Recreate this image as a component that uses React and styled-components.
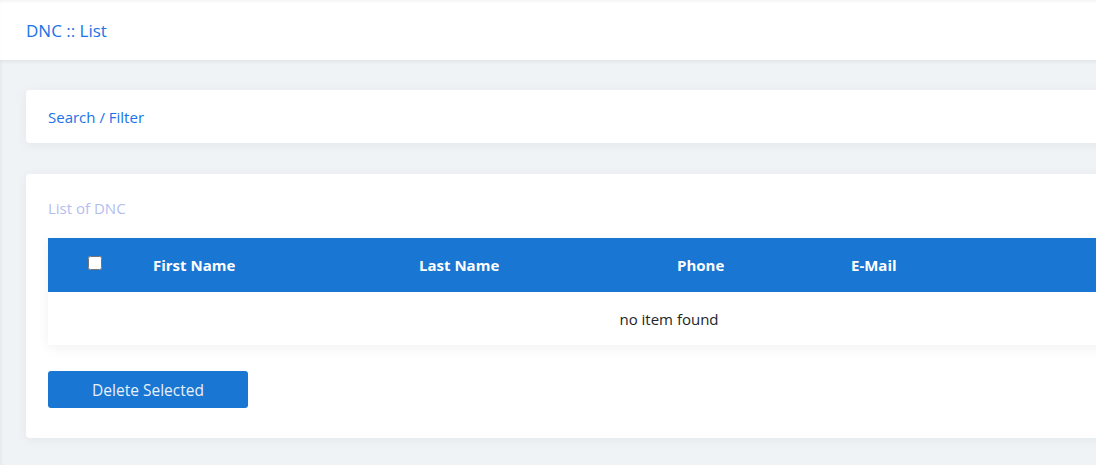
import React from "react";
import styled, { createGlobalStyle } from "styled-components";

const Global = createGlobalStyle`
  html, body { margin: 0; padding: 0; overflow: hidden; }
  body {
    background: #f0f3f6;
    font-family: "Open Sans", "Noto Sans", sans-serif;
  }
`;

const Page = styled.div`
  width: 1338px;
  min-height: 465px;
  background: #f0f3f6;
  box-shadow: inset 2px 0 3px rgba(0,0,0,0.04);
`;

const Header = styled.header`
  height: 60px;
  background: #fff;
  display: flex;
  align-items: center;
  padding: 0 26px;
  box-shadow: 0 2px 4px rgba(0,0,0,0.06), inset 0 2px 2px rgba(0,0,0,0.04);
  color: #1a73e8;
  font-size: 17px;
`;

const Main = styled.main`
  padding: 30px 26px;
  display: flex;
  flex-direction: column;
  gap: 31px;
`;

const Card = styled.section`
  background: #fff;
  border-radius: 4px;
  box-shadow: 0 2px 10px rgba(160, 175, 190, 0.18);
  padding: ${p => p.$pad || "0 22px"};
`;

const CardTitle = styled.div`
  height: ${p => p.$h || "53px"};
  margin-bottom: ${p => p.$mb || "0"};
  display: flex;
  align-items: center;
  font-size: 15px;
  color: ${p => p.$muted ? "#b5bdf0" : "#1a73e8"};
`;

const Table = styled.div`
  box-shadow: 0 3px 12px rgba(0,0,0,0.06);
`;

const HeadRow = styled.div`
  display: grid;
  grid-template-columns: 105px 266px 258px 174px 1fr;
  height: 54px;
  align-items: center;
  background: #1976d2;
  color: #fff;
  font-weight: 700;
  font-size: 15px;
`;

const CheckCell = styled.div`
  padding-left: 40px;
  display: flex;
  align-items: center;
  padding-bottom: 4px;
`;

const Check = styled.input`
  width: 14px;
  height: 14px;
  margin: 0;
`;

const HeadCell = styled.div``;

const EmptyRow = styled.div`
  height: 53px;
  display: flex;
  align-items: center;
  justify-content: center;
  font-size: 15px;
  color: #212529;
  background: #fff;
`;

const Button = styled.button`
  margin-top: 26px;
  width: 200px;
  height: 37px;
  background: #1976d2;
  color: #e8f0fb;
  border: none;
  border-radius: 3px;
  font-family: inherit;
  font-size: 15.5px;
  cursor: pointer;
`;

export default function App() {
  return (
    <Page>
      <Global />
      <Header>DNC :: List</Header>
      <Main>
        <Card>
          <CardTitle>Search / Filter</CardTitle>
        </Card>
        <Card $pad="16px 22px 30px">
          <CardTitle $muted $h="36px" $mb="12px">List of DNC</CardTitle>
          <Table>
            <HeadRow>
              <CheckCell><Check type="checkbox" /></CheckCell>
              <HeadCell>First Name</HeadCell>
              <HeadCell>Last Name</HeadCell>
              <HeadCell>Phone</HeadCell>
              <HeadCell>E-Mail</HeadCell>
            </HeadRow>
            <EmptyRow>no item found</EmptyRow>
          </Table>
          <Button>Delete Selected</Button>
        </Card>
      </Main>
    </Page>
  );
}
